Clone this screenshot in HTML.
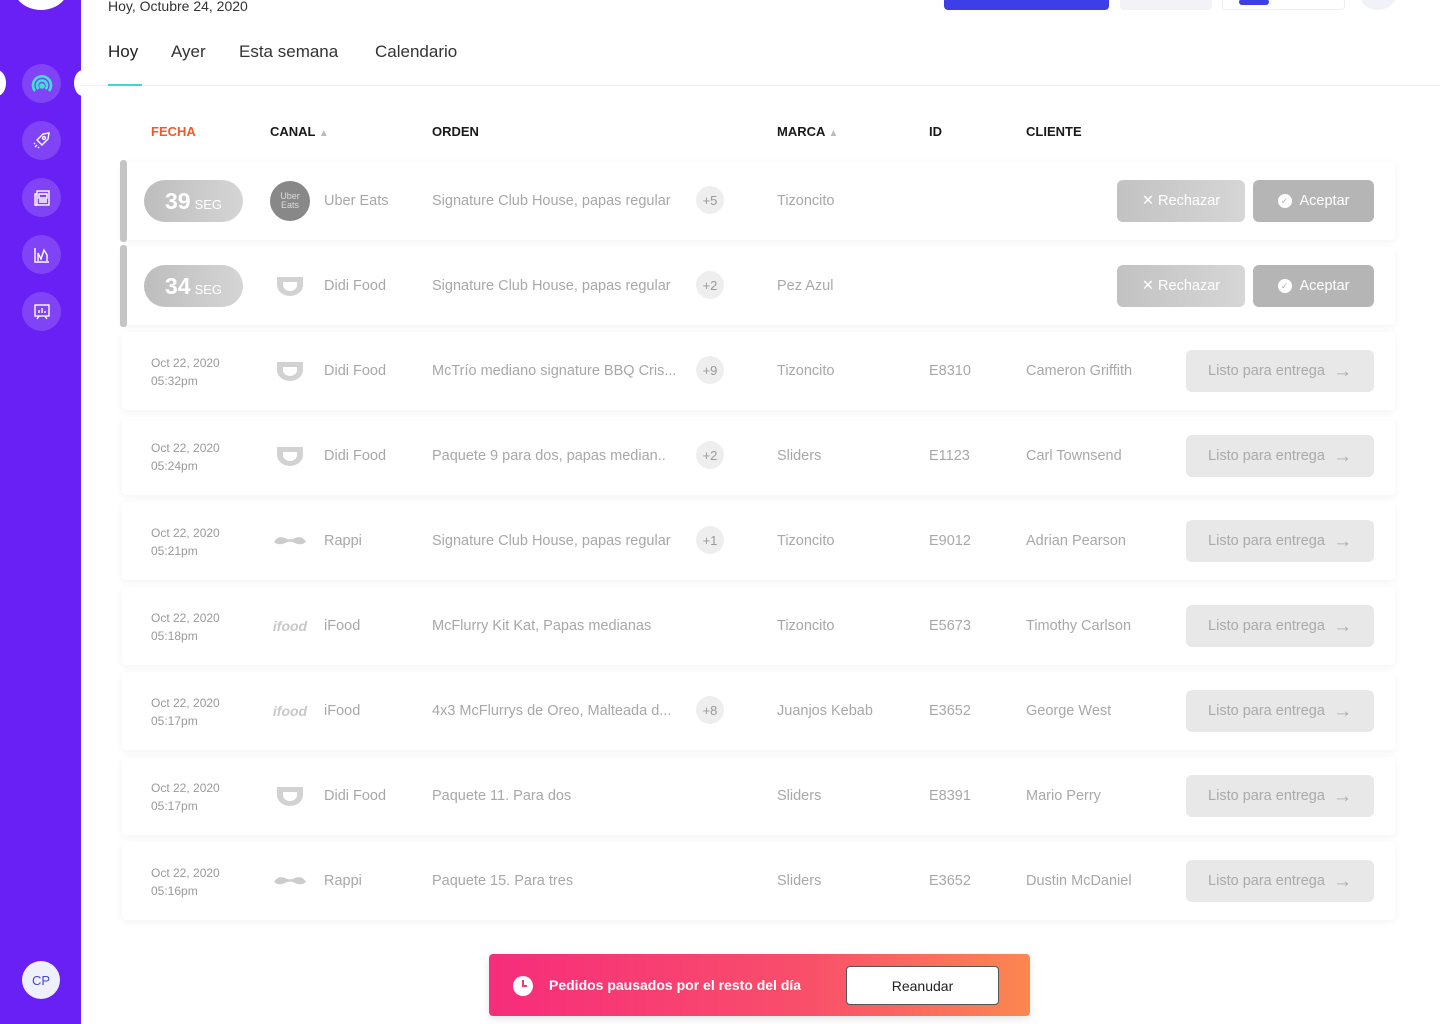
<!DOCTYPE html>
<html><head><meta charset="utf-8"><style>
*{box-sizing:border-box;margin:0;padding:0}
body{width:1440px;height:1024px;overflow:hidden;background:#fff;font-family:"Liberation Sans",sans-serif;position:relative;color:#222}
.sb{position:absolute;left:0;top:0;width:81px;height:1024px;background:#6820f5}
.ic{position:absolute;left:22px;width:39px;height:39px;border-radius:50%;background:rgba(255,255,255,.16);display:flex;align-items:center;justify-content:center}
.abs{position:absolute}
.tab{position:absolute;top:42px;font-size:17px;color:#333}
.th{position:absolute;top:124px;font-size:13px;font-weight:bold;color:#1a1a1a}
.row{position:absolute;left:122px;width:1273px;height:78px;background:#fff;box-shadow:0 2px 8px rgba(0,0,0,.05);border-radius:4px}
.g{color:#a8a8a8;font-size:14.5px;position:absolute;top:31px!important}
.dt{position:absolute;left:29px;top:22px;font-size:12px;color:#9a9a9a;line-height:18px}
.logo{position:absolute;left:148px;top:19px;width:40px;height:40px;border-radius:50%;display:flex;align-items:center;justify-content:center}
.plus{position:absolute;left:574px;top:24px;width:28px;height:28px;border-radius:50%;background:#eee;color:#999;font-size:13px;display:flex;align-items:center;justify-content:center}
.listo{position:absolute;left:1064px;top:18px;width:188px;height:42px;border-radius:6px;background:#e8e8e8;color:#aaa;font-size:14.5px;display:flex;align-items:center;justify-content:center;gap:8px}
.listo span{font-size:19px;line-height:1}
.pill{position:absolute;left:22px;top:18px;width:99px;height:42px;border-radius:21px;background:linear-gradient(90deg,#bdbdbd,#d5d5d5);color:#fff;display:flex;align-items:center;justify-content:center;gap:4px}
.bar{position:absolute;left:-2px;top:-2px;width:7px;height:82px;background:#c5c5c5;border-radius:3px}
.rech{position:absolute;left:995px;top:18px;width:128px;height:42px;border-radius:6px;background:linear-gradient(90deg,#c2c2c2,#d6d6d6);color:#fff;font-size:14.5px;display:flex;align-items:center;justify-content:center;gap:8px}
.acep{position:absolute;left:1131px;top:18px;width:121px;height:42px;border-radius:6px;background:#b5b5b5;color:#fff;font-size:14.5px;display:flex;align-items:center;justify-content:center;gap:8px}
</style></head><body>
<div class="sb"></div>
<div class="abs" style="left:13px;top:-38px;width:56px;height:48px;border-radius:50%;background:#fff"></div>
<div class="abs" style="left:-12px;top:70px;width:18px;height:26px;border-radius:50%;background:#fff"></div>
<div class="abs" style="left:74px;top:70px;width:18px;height:26px;border-radius:50%;background:#fff"></div>
<div class="ic" style="top:64px"><svg width="22" height="22" viewBox="0 0 22 22" fill="none" stroke="#3fe0d6" stroke-width="2.6"><path d="M4 18A9 9 0 1 1 18 18"/><path d="M7.5 16A5 5 0 1 1 14.5 16"/><circle cx="11" cy="13" r="1.5"/></svg></div>
<div class="ic" style="top:121px"><svg width="20" height="20" viewBox="0 0 20 20" fill="none" stroke="#fff" stroke-width="1.4"><path d="M8 12l-3-3 6-6 6-1-1 6-6 6z"/><circle cx="12" cy="7" r="1.5"/><path d="M5 14l-2 2M3 12l-1 1M7 16l-1 1"/></svg></div>
<div class="ic" style="top:178px"><svg width="20" height="20" viewBox="0 0 20 20" fill="none" stroke="#fff" stroke-width="1.4"><rect x="5" y="3" width="12" height="14"/><path d="M5 6H3v11h2M7 6h8v4H7zM7 12h8M7 14h8"/></svg></div>
<div class="ic" style="top:235px"><svg width="20" height="20" viewBox="0 0 20 20" fill="none" stroke="#fff" stroke-width="1.4"><path d="M3 3v14h14M6 16V8l3 6 3-9 3 5v6"/></svg></div>
<div class="ic" style="top:292px"><svg width="20" height="20" viewBox="0 0 20 20" fill="none" stroke="#fff" stroke-width="1.4"><rect x="3" y="3" width="14" height="11"/><path d="M7 11V8M10 11V6M13 11V9M7 14l-2 3M13 14l2 3"/></svg></div>
<div class="abs" style="left:22px;top:961px;width:38px;height:38px;border-radius:50%;background:#eef0fb;color:#4a46d8;font-size:13px;display:flex;align-items:center;justify-content:center">CP</div>

<div class="abs" style="left:108px;top:-2px;font-size:14px;color:#333">Hoy, Octubre 24, 2020</div>
<div class="abs" style="left:944px;top:-10px;width:165px;height:20px;border-radius:4px;background:#3e3ee8"></div>
<div class="abs" style="left:1120px;top:-10px;width:92px;height:20px;border-radius:4px;background:#f2f2f7"></div>
<div class="abs" style="left:1222px;top:-10px;width:123px;height:20px;border-radius:4px;border:1px solid #eee;background:#fff"><div style="position:absolute;left:16px;top:8px;width:30px;height:6px;border-radius:3px;background:#3e3ee8"></div></div>
<div class="abs" style="left:1360px;top:-20px;width:36px;height:30px;border-radius:50%;background:#f1f1f8"></div>

<div class="tab" style="left:108px;color:#222">Hoy</div>
<div class="tab" style="left:171px">Ayer</div>
<div class="tab" style="left:239px">Esta semana</div>
<div class="tab" style="left:375px">Calendario</div>
<div class="abs" style="left:81px;top:85px;width:1359px;height:1px;background:#f1f1f1"></div>
<div class="abs" style="left:108px;top:84px;width:34px;height:2px;background:#3fd6d0"></div>

<div class="th" style="left:151px;color:#f05a2a">FECHA</div>
<div class="th" style="left:270px">CANAL <span style="color:#bbb;font-size:10px">▲</span></div>
<div class="th" style="left:432px">ORDEN</div>
<div class="th" style="left:777px">MARCA <span style="color:#bbb;font-size:10px">▲</span></div>
<div class="th" style="left:929px">ID</div>
<div class="th" style="left:1026px">CLIENTE</div>

<div class="row" style="top:162px"><div class="bar"></div>
<div class="pill"><b style="font-size:23px">39</b><span style="font-size:13px;margin-top:6px">SEG</span></div>
<div class="logo" style="background:#888;color:#ddd;font-size:9px;line-height:9px;text-align:center">Uber<br>Eats</div>
<div class="g" style="left:202px">Uber Eats</div>
<div class="g" style="left:310px">Signature Club House, papas regular</div><div class="plus">+5</div>
<div class="g" style="left:655px">Tizoncito</div>
<div class="rech">✕ Rechazar</div><div class="acep"><span style="width:14px;height:14px;border-radius:50%;background:#fff;color:#b5b5b5;font-size:9px;display:flex;align-items:center;justify-content:center">✓</span>Aceptar</div></div>

<div class="row" style="top:247px"><div class="bar"></div>
<div class="pill"><b style="font-size:23px">34</b><span style="font-size:13px;margin-top:6px">SEG</span></div>
<div class="logo"><svg width="32" height="26" viewBox="0 0 32 26"><path d="M3 4h26v8a13 11 0 0 1-26 0z M9 9v3a7 6 0 0 0 14 0V9z" fill="#d2d2d2" fill-rule="evenodd"/></svg></div>
<div class="g" style="left:202px">Didi Food</div>
<div class="g" style="left:310px">Signature Club House, papas regular</div><div class="plus">+2</div>
<div class="g" style="left:655px">Pez Azul</div>
<div class="rech">✕ Rechazar</div><div class="acep"><span style="width:14px;height:14px;border-radius:50%;background:#fff;color:#b5b5b5;font-size:9px;display:flex;align-items:center;justify-content:center">✓</span>Aceptar</div></div>

<div class="row" style="top:332px"><div class="dt">Oct 22, 2020<br>05:32pm</div><div class="logo"><svg width="32" height="26" viewBox="0 0 32 26"><path d="M3 4h26v8a13 11 0 0 1-26 0z M9 9v3a7 6 0 0 0 14 0V9z" fill="#d2d2d2" fill-rule="evenodd"/></svg></div><div class="g" style="left:202px">Didi Food</div><div class="g" style="left:310px">McTrío mediano signature BBQ Cris...</div><div class="plus">+9</div><div class="g" style="left:655px">Tizoncito</div><div class="g" style="left:807px">E8310</div><div class="g" style="left:904px">Cameron Griffith</div><div class="listo">Listo para entrega <span>→</span></div></div>

<div class="row" style="top:417px"><div class="dt">Oct 22, 2020<br>05:24pm</div><div class="logo"><svg width="32" height="26" viewBox="0 0 32 26"><path d="M3 4h26v8a13 11 0 0 1-26 0z M9 9v3a7 6 0 0 0 14 0V9z" fill="#d2d2d2" fill-rule="evenodd"/></svg></div><div class="g" style="left:202px">Didi Food</div><div class="g" style="left:310px">Paquete 9 para dos, papas median..</div><div class="plus">+2</div><div class="g" style="left:655px">Sliders</div><div class="g" style="left:807px">E1123</div><div class="g" style="left:904px">Carl Townsend</div><div class="listo">Listo para entrega <span>→</span></div></div>

<div class="row" style="top:502px"><div class="dt">Oct 22, 2020<br>05:21pm</div><div class="logo"><svg width="34" height="14" viewBox="0 0 34 14"><path d="M1 8Q5 1 12 4Q16 6 17 5Q18 6 22 4Q29 1 33 8Q28 12 22 9Q18 7 17 8Q16 7 12 9Q6 12 1 8z" fill="#ccc"/></svg></div><div class="g" style="left:202px">Rappi</div><div class="g" style="left:310px">Signature Club House, papas regular</div><div class="plus">+1</div><div class="g" style="left:655px">Tizoncito</div><div class="g" style="left:807px">E9012</div><div class="g" style="left:904px">Adrian Pearson</div><div class="listo">Listo para entrega <span>→</span></div></div>

<div class="row" style="top:587px"><div class="dt">Oct 22, 2020<br>05:18pm</div><div class="logo" style="color:#c8c8c8;font-weight:bold;font-style:italic;font-size:14px">ifood</div><div class="g" style="left:202px">iFood</div><div class="g" style="left:310px">McFlurry Kit Kat, Papas medianas</div><div class="g" style="left:655px">Tizoncito</div><div class="g" style="left:807px">E5673</div><div class="g" style="left:904px">Timothy Carlson</div><div class="listo">Listo para entrega <span>→</span></div></div>

<div class="row" style="top:672px"><div class="dt">Oct 22, 2020<br>05:17pm</div><div class="logo" style="color:#c8c8c8;font-weight:bold;font-style:italic;font-size:14px">ifood</div><div class="g" style="left:202px">iFood</div><div class="g" style="left:310px">4x3 McFlurrys de Oreo, Malteada d...</div><div class="plus">+8</div><div class="g" style="left:655px">Juanjos Kebab</div><div class="g" style="left:807px">E3652</div><div class="g" style="left:904px">George West</div><div class="listo">Listo para entrega <span>→</span></div></div>

<div class="row" style="top:757px"><div class="dt">Oct 22, 2020<br>05:17pm</div><div class="logo"><svg width="32" height="26" viewBox="0 0 32 26"><path d="M3 4h26v8a13 11 0 0 1-26 0z M9 9v3a7 6 0 0 0 14 0V9z" fill="#d2d2d2" fill-rule="evenodd"/></svg></div><div class="g" style="left:202px">Didi Food</div><div class="g" style="left:310px">Paquete 11. Para dos</div><div class="g" style="left:655px">Sliders</div><div class="g" style="left:807px">E8391</div><div class="g" style="left:904px">Mario Perry</div><div class="listo">Listo para entrega <span>→</span></div></div>

<div class="row" style="top:842px"><div class="dt">Oct 22, 2020<br>05:16pm</div><div class="logo"><svg width="34" height="14" viewBox="0 0 34 14"><path d="M1 8Q5 1 12 4Q16 6 17 5Q18 6 22 4Q29 1 33 8Q28 12 22 9Q18 7 17 8Q16 7 12 9Q6 12 1 8z" fill="#ccc"/></svg></div><div class="g" style="left:202px">Rappi</div><div class="g" style="left:310px">Paquete 15. Para tres</div><div class="g" style="left:655px">Sliders</div><div class="g" style="left:807px">E3652</div><div class="g" style="left:904px">Dustin McDaniel</div><div class="listo">Listo para entrega <span>→</span></div></div>

<div class="abs" style="left:489px;top:954px;width:541px;height:62px;border-radius:4px;background:linear-gradient(90deg,#f72c7b,#f9506a 60%,#fb874f);box-shadow:0 3px 8px rgba(0,0,0,.1)">
<div class="abs" style="left:24px;top:22px;width:20px;height:20px;border-radius:50%;background:#fff"><div style="position:absolute;left:9px;top:4px;width:2px;height:7px;background:#f73a74"></div><div style="position:absolute;left:9px;top:9px;width:5px;height:2px;background:#f73a74"></div></div>
<div class="abs" style="left:60px;top:23px;color:#fff;font-weight:bold;font-size:14px">Pedidos pausados por el resto del día</div>
<div class="abs" style="left:357px;top:12px;width:153px;height:39px;border-radius:4px;background:#fff;border:1px solid #555;display:flex;align-items:center;justify-content:center;font-size:14px;color:#222">Reanudar</div>
</div>
</body></html>
